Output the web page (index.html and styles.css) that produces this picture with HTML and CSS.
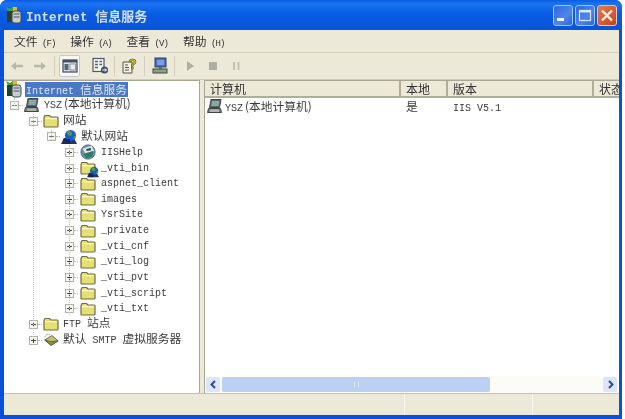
FILE: index.html
```html
<!DOCTYPE html>
<html lang="zh">
<head>
<meta charset="utf-8">
<title>Internet 信息服务</title>
<link rel="stylesheet" href="styles.css">
</head>
<body>
<svg class="defs" width="0" height="0" aria-hidden="true">
  <symbol id="folder" viewBox="0 0 16 16">
    <path d="M1 4.5 L2 2.5 H6.5 L8 4 H14 Q15 4 15 5 V13 Q15 14 14 14 H2 Q1 14 1 13 Z" fill="#e6e070" stroke="#6e6a48" stroke-width="1.2"/>
    <path d="M2 5 H14 V6.2 H2 Z" fill="#fbf6c8"/>
  </symbol>
  <symbol id="computer" viewBox="0 0 16 16">
    <path d="M4 1.5 H14 L12.5 9.5 H2.5 Z" fill="#5c6a68" stroke="#3c4644"/>
    <path d="M5 3 H12.5 L11.6 8 H4.2 Z" fill="#8aa8a8"/>
    <path d="M1.5 10.5 H13.5 L14.5 14.5 H.5 Z" fill="#7a807c" stroke="#3c4644"/>
    <path d="M3 12 H12 M3 13.2 H12" stroke="#c8ccc8"/>
  </symbol>
  <symbol id="globe" viewBox="0 0 16 16">
    <path d="M0 15 L3 9 H13 L16 15 Z" fill="#26346c"/>
    <circle cx="9.5" cy="6.5" r="5.5" fill="#1e5cc8"/>
    <path d="M7 1.5 Q12 2 11 6 Q8 8 6 5 Z M12 8 L15 6 L13 11 Z" fill="#4ea04a"/>
    <path d="M2 10 H9 V15 H2 Z" fill="#18285c"/>
  </symbol>
  <symbol id="help-site" viewBox="0 0 18 18">
    <circle cx="9" cy="9" r="8" fill="#6a94a8" stroke="#46606c"/>
    <path d="M3 5 L13 2 L16 8 L6 11 Z" fill="#dce6e4"/>
    <path d="M4 11 L15 8 L14 14 L7 16 Z" fill="#2e7c62"/>
    <path d="M7 5.5 L12 4.5 L12.5 7 L7.5 8 Z" fill="#284c70"/>
  </symbol>
  <symbol id="iis" viewBox="0 0 18 18">
    <path d="M1 1 L5 3 L9 0 L8 6 H3 Z" fill="#47a03c"/>
    <path d="M8 1 H12 V5 H8 Z" fill="#e8b820"/>
    <path d="M2 5 H8 V16 H2 Z" fill="#27402a"/>
    <rect x="7" y="5" width="9" height="12" rx="2.5" fill="#c8ccd0" stroke="#404850"/>
    <path d="M8.5 8 H14.5 M8.5 11 H14.5" stroke="#505860"/>
  </symbol>
  <symbol id="smtp" viewBox="0 0 18 16">
    <path d="M2 5 Q3 1 8 2" fill="none" stroke="#808878" stroke-dasharray="2 1"/>
    <path d="M2 8 L10 3 L17 9 L9 14 Z" fill="#c4c070" stroke="#5c6040"/>
    <path d="M2 8 L9 10 L17 9 L9 14 Z" fill="#8c9048" stroke="#5c6040"/>
  </symbol>
</svg>

<div class="window">
  <header class="titlebar">
    <svg class="title-icon" width="18" height="18"><use href="#iis"/></svg>
    <span class="title-text">Internet <span class="title-zh">信息服务</span></span>
    <div class="caption-buttons">
      <span class="cap cap-blue"><svg width="20" height="21" viewBox="0 0 20 21"><rect x="4" y="13" width="7" height="3" fill="#f0f4fc"/></svg></span>
      <span class="cap cap-blue"><svg width="20" height="21" viewBox="0 0 20 21"><rect x="4.5" y="5.5" width="11" height="10" fill="none" stroke="#dce6fa" stroke-width="1.2"/><rect x="4.5" y="5.5" width="11" height="2" fill="#dce6fa"/></svg></span>
      <span class="cap cap-red"><svg width="20" height="21" viewBox="0 0 20 21"><path d="M5 5.5 L15 15.5 M15 5.5 L5 15.5" stroke="#fbeee8" stroke-width="2.4"/></svg></span>
    </div>
  </header>

  <div class="client">
    <nav class="menubar">
      <span class="menu-item"><span class="zh">文件</span> (F)</span>
      <span class="menu-item"><span class="zh">操作</span> (A)</span>
      <span class="menu-item"><span class="zh">查看</span> (V)</span>
      <span class="menu-item"><span class="zh">帮助</span> (H)</span>
    </nav>

    <div class="toolbar">
      <span class="tool"><svg width="18" height="18" viewBox="0 0 18 18"><path d="M3 9 L8 5 V7.7 H15 V10.3 H8 V13 Z" fill="#b4b8a8"/></svg></span>
      <span class="tool"><svg width="18" height="18" viewBox="0 0 18 18"><path d="M15 9 L10 5 V7.7 H3 V10.3 H10 V13 Z" fill="#b4b8a8"/></svg></span>
      <span class="sep"></span>
      <span class="tool tool-active"><svg width="16" height="14" viewBox="0 0 16 14"><rect x="1" y="1" width="14" height="12" fill="#d8dce4" stroke="#404c60" stroke-width="1.2"/><rect x="1" y="1" width="14" height="2.4" fill="#404c60"/><rect x="2.5" y="5" width="4" height="6" fill="#566478"/><rect x="8" y="5" width="5.5" height="6" fill="#e8ecf0" stroke="#566478" stroke-width=".6"/></svg></span>
      <span class="tool"><svg width="18" height="18" viewBox="0 0 18 18"><rect x="2" y="1.5" width="11" height="13" fill="#f4f4ee" stroke="#50586a" stroke-width="1.2"/><path d="M4 4.5 H7 M4 7.5 H7 M4 10.5 H7 M8.5 4.5 H11 M8.5 7.5 H11" stroke="#506078" stroke-width="1.3"/><circle cx="13.5" cy="13" r="3.6" fill="#46506a"/><path d="M11.5 13 H15.5 M14 11.5 L15.5 13 L14 14.5" stroke="#fff" fill="none"/></svg></span>
      <span class="sep"></span>
      <span class="tool"><svg width="18" height="18" viewBox="0 0 18 18"><path d="M2 5 H11 V16 H2 Z" fill="#f4f2e4" stroke="#505448"/><path d="M4 8 H7 M4 10.5 H8 M4 13 H8" stroke="#505448"/><text class="help-mark" x="11.5" y="12">?</text></svg></span>
      <span class="sep"></span>
      <span class="tool"><svg width="18" height="18" viewBox="0 0 18 18"><rect x="4" y="1" width="11" height="9" fill="#4c70c0" stroke="#303c60"/><rect x="6" y="3" width="7" height="5" fill="#7c9ce0"/><rect x="8" y="10" width="3" height="2" fill="#6a7068"/><rect x="2" y="12" width="14" height="4" fill="#90a088" stroke="#3c4c38"/></svg></span>
      <span class="sep"></span>
      <span class="tool"><svg width="12" height="14" viewBox="0 0 12 14"><path d="M3 2 L10 7 L3 12 Z" fill="#aeb0a4"/></svg></span>
      <span class="tool"><svg width="12" height="14" viewBox="0 0 12 14"><rect x="2" y="3" width="8" height="8" fill="#aeb0a4"/></svg></span>
      <span class="tool"><svg width="12" height="14" viewBox="0 0 12 14"><path d="M3 3 H5 V11 H3 Z M7.5 3 H9.5 V11 H7.5 Z" fill="#c0c2b6"/></svg></span>
    </div>

    <main class="panes">
      <aside class="tree">
        <span class="guide g-a"></span>
        <span class="guide g-b"></span>
        <span class="guide g-c"></span>
        <span class="guide g-d"></span>
        <div class="row root"><svg width="18" height="18"><use href="#iis"/></svg><span class="label selected">Internet <span class="zh">信息服务</span></span></div>
        <div class="row d1"><span class="exp minus"></span><span class="dash"></span><svg width="16" height="16"><use href="#computer"/></svg><span class="label">YSZ<span class="zh paren">(本地计算机)</span></span></div>
        <div class="row d2"><span class="exp minus"></span><span class="dash"></span><svg width="16" height="16"><use href="#folder"/></svg><span class="label"><span class="zh">网站</span></span></div>
        <div class="row d3"><span class="exp minus"></span><span class="dash"></span><svg width="16" height="16"><use href="#globe"/></svg><span class="label"><span class="zh">默认网站</span></span></div>
        <div class="row d4"><span class="exp"></span><span class="dash"></span><svg width="16" height="16"><use href="#help-site"/></svg><span class="label">IISHelp</span></div>
        <div class="row d4"><span class="exp"></span><span class="dash"></span><span class="stack"><svg width="16" height="16"><use href="#folder"/></svg><svg class="badge" width="12" height="12"><use href="#globe"/></svg></span><span class="label">_vti_bin</span></div>
        <div class="row d4"><span class="exp"></span><span class="dash"></span><svg width="16" height="16"><use href="#folder"/></svg><span class="label">aspnet_client</span></div>
        <div class="row d4"><span class="exp"></span><span class="dash"></span><svg width="16" height="16"><use href="#folder"/></svg><span class="label">images</span></div>
        <div class="row d4"><span class="exp"></span><span class="dash"></span><svg width="16" height="16"><use href="#folder"/></svg><span class="label">YsrSite</span></div>
        <div class="row d4"><span class="exp"></span><span class="dash"></span><svg width="16" height="16"><use href="#folder"/></svg><span class="label">_private</span></div>
        <div class="row d4"><span class="exp"></span><span class="dash"></span><svg width="16" height="16"><use href="#folder"/></svg><span class="label">_vti_cnf</span></div>
        <div class="row d4"><span class="exp"></span><span class="dash"></span><svg width="16" height="16"><use href="#folder"/></svg><span class="label">_vti_log</span></div>
        <div class="row d4"><span class="exp"></span><span class="dash"></span><svg width="16" height="16"><use href="#folder"/></svg><span class="label">_vti_pvt</span></div>
        <div class="row d4"><span class="exp"></span><span class="dash"></span><svg width="16" height="16"><use href="#folder"/></svg><span class="label">_vti_script</span></div>
        <div class="row d4"><span class="exp"></span><span class="dash"></span><svg width="16" height="16"><use href="#folder"/></svg><span class="label">_vti_txt</span></div>
        <div class="row d2"><span class="exp"></span><span class="dash"></span><svg width="16" height="16"><use href="#folder"/></svg><span class="label">FTP <span class="zh">站点</span></span></div>
        <div class="row d2"><span class="exp"></span><span class="dash"></span><svg width="16" height="16"><use href="#smtp"/></svg><span class="label"><span class="zh">默认</span> SMTP <span class="zh">虚拟服务器</span></span></div>
      </aside>

      <section class="list">
        <div class="list-head">
          <span class="col c-name">计算机</span>
          <span class="col c-local">本地</span>
          <span class="col c-ver">版本</span>
          <span class="col c-state">状态</span>
        </div>
        <div class="list-body">
          <div class="list-row">
            <span class="c-name cell"><svg width="16" height="16"><use href="#computer"/></svg>YSZ<span class="zh paren">(本地计算机)</span></span>
            <span class="c-local cell"><span class="zh">是</span></span>
            <span class="c-ver cell">IIS V5.1</span>
          </div>
        </div>
        <div class="hscroll">
          <span class="arrow"><svg width="9" height="9" viewBox="0 0 9 9"><path d="M6 1 L2.5 4.5 L6 8" fill="none" stroke="#2c4c98" stroke-width="2"/></svg></span>
          <div class="track"><div class="thumb"><span class="grip"></span></div></div>
          <span class="arrow"><svg width="9" height="9" viewBox="0 0 9 9"><path d="M3 1 L6.5 4.5 L3 8" fill="none" stroke="#2c4c98" stroke-width="2"/></svg></span>
        </div>
      </section>
    </main>

    <footer class="status">
      <span class="st st1"></span>
      <span class="st st2"></span>
      <span class="st st3"></span>
    </footer>
  </div>
</div>
</body>
</html>
```

FILE: styles.css
```css
* { box-sizing: border-box; }

html, body {
  margin: 0;
  width: 625px;
  height: 419px;
  overflow: hidden;
  background: #fff;
}

body {
  font-family: "Liberation Mono", "Noto Sans CJK SC", monospace;
  font-size: 10px;
  color: #333;
}

.defs { position: absolute; }

.zh {
  font-family: "Noto Sans CJK SC", sans-serif;
  font-size: 11.75px;
  line-height: 14px;
  letter-spacing: 0;
}

.paren { margin-left: 2px; }

.window {
  width: 622px;
  height: 419px;
  display: flex;
  flex-direction: column;
  background: #0a50d8;
  border-radius: 7px 7px 0 0;
  overflow: hidden;
  filter: blur(0.45px);
}

.titlebar {
  height: 30px;
  flex: none;
  display: flex;
  align-items: center;
  padding: 0 5px 0 5px;
  background: linear-gradient(#0a5ce0 0, #1a74f0 12%, #0a5ce4 45%, #0754d8 100%);
}

.title-icon { flex: none; }

.title-text {
  margin-left: 3px;
  font-weight: bold;
  font-size: 12.5px;
  letter-spacing: .2px;
  color: #d4e0f8;
}

.title-zh {
  font-family: "Noto Sans CJK SC", sans-serif;
  font-size: 13px;
  letter-spacing: 0;
}

.caption-buttons {
  margin-left: auto;
  display: flex;
  gap: 2px;
}

.cap {
  width: 20px;
  height: 21px;
  border: 1px solid #a8c4f4;
  border-radius: 3px;
  display: flex;
  align-items: center;
  justify-content: center;
}

.cap svg { margin: -1px; }
.cap-blue { background: linear-gradient(135deg, #2e6adc, #4c86ec 60%, #2f62d8); }
.cap-red { background: linear-gradient(135deg, #e07a50, #d85a30 60%, #c04418); border-color: #e8c8c0; }

.client {
  flex: 1;
  min-height: 0;
  margin: 0 3px 4px 4px;
  display: flex;
  flex-direction: column;
  background: #ece9d8;
}

.menubar {
  height: 23px;
  flex: none;
  display: flex;
  align-items: center;
  padding-left: 10px;
  border-bottom: 1px solid #cfccb8;
  font-size: 9px;
  letter-spacing: -.9px;
}

.menu-item {
  width: 56.3px;
  flex: none;
  white-space: nowrap;
}

.toolbar {
  height: 27px;
  flex: none;
  display: flex;
  align-items: center;
  padding-left: 1px;
  border-bottom: 1px solid #cfccb8;
}

.tool {
  width: 23px;
  height: 22px;
  display: flex;
  align-items: center;
  justify-content: center;
  flex: none;
}

.tool-active {
  width: 21px;
  margin: 0 8px 0 1px;
  background: #f8f7f0;
  border: 1px solid #c4c9d8;
  border-radius: 2px;
}

.sep {
  width: 1px;
  height: 20px;
  margin: 0 3px;
  background: #d4d0bc;
  flex: none;
}

.help-mark {
  font-family: "Liberation Sans", sans-serif;
  font-size: 14px;
  font-weight: bold;
  text-anchor: middle;
  fill: #d8c020;
  stroke: #4c4c18;
  stroke-width: .5px;
}

.panes {
  flex: 1;
  min-height: 0;
  display: flex;
  gap: 4px;
}

.tree {
  position: relative;
  width: 196px;
  flex: none;
  background: #fff;
  border-top: 1px solid #a9a691;
  border-right: 1px solid #a9a691;
  overflow: hidden;
}

.guide {
  position: absolute;
  width: 0;
  border-left: 1px dotted #c4c4bc;
}

.g-a { left: 10px; top: 17px; height: 8px; }
.g-b { left: 29px; top: 33px; height: 225px; }
.g-c { left: 47px; top: 49px; height: 10px; }
.g-d { left: 65px; top: 64px; height: 170px; }

.row {
  height: 15.65px;
  display: flex;
  align-items: center;
  white-space: nowrap;
}

.row svg { flex: none; }
.root { height: 16.65px; padding-left: 1px; }
.root svg { margin-right: 2px; }
.d1 { padding-left: 6px; }
.d2 { padding-left: 25px; }
.d3 { padding-left: 43px; }
.d4 { padding-left: 61px; }

.exp {
  width: 9px;
  height: 9px;
  flex: none;
  border: 1px solid #b0b4a8;
  background:
    linear-gradient(#444, #444) center / 5px 1px no-repeat,
    linear-gradient(#444, #444) center / 1px 5px no-repeat,
    #f6f6f0;
}

.exp.minus {
  background:
    linear-gradient(#777, #777) center / 5px 1px no-repeat,
    #f6f6f0;
}

.dash {
  width: 4px;
  flex: none;
  border-top: 1px dotted #b8b8b0;
  margin-right: 2px;
}

.d1 .dash, .d2 .dash, .d3 .dash { margin-right: 1px; }

.stack {
  position: relative;
  width: 16px;
  height: 16px;
  flex: none;
}

.badge {
  position: absolute;
  right: -3px;
  bottom: -2px;
}

.label {
  margin-left: 5px;
  font-size: 10px;
  color: #3a3a3a;
}

.d1 .label, .d2 .label, .d3 .label {
  margin-left: 4px;
  margin-bottom: 3px;
}

.selected {
  margin-left: 0;
  padding: 0 1px;
  background: #4a78c4;
  color: #dfe8f8;
}

.list {
  flex: 1;
  min-width: 0;
  display: flex;
  flex-direction: column;
  background: #fff;
  border-top: 1px solid #a9a691;
  border-left: 1px solid #a9a691;
  overflow: hidden;
}

.list-head {
  height: 17px;
  flex: none;
  display: flex;
  background: #ece9d8;
  border-bottom: 2px solid #b0ad98;
  font-family: "Noto Sans CJK SC", sans-serif;
  font-size: 12px;
}

.col {
  padding-left: 5px;
  line-height: 15px;
  white-space: nowrap;
  border-right: 2px solid #b0ad98;
}

.c-name { width: 196px; flex: none; }
.c-local { width: 47px; flex: none; }
.c-ver { width: 146px; flex: none; }
.c-state { flex: 1; border-right: 0; overflow: hidden; }

.list-body {
  flex: 1;
  min-height: 0;
}

.list-row {
  display: flex;
  height: 17px;
  align-items: baseline;
}

.cell {
  display: block;
  padding-left: 5px;
  font-size: 10px;
  color: #3a3a3a;
  white-space: nowrap;
}

.cell svg { margin: 0 2px 0 -3px; vertical-align: -3px; }

.hscroll {
  height: 17px;
  flex: none;
  display: flex;
  align-items: center;
  padding: 0 2px 1px 1px;
  background: #fbfbf8;
}

.arrow {
  width: 14px;
  height: 15px;
  flex: none;
  display: flex;
  align-items: center;
  justify-content: center;
  background: #dce6f8;
  border-radius: 2px;
}

.track {
  flex: 1;
  height: 15px;
  padding-left: 2px;
}

.thumb {
  width: 268px;
  height: 100%;
  display: flex;
  align-items: center;
  justify-content: center;
  background: #bcd0f4;
  border-radius: 2px;
}

.grip {
  width: 5px;
  height: 5px;
  border-left: 1px solid #e0e8fa;
  border-right: 1px solid #e0e8fa;
}

.status {
  height: 22px;
  flex: none;
  display: flex;
  border-top: 1px solid #c4c1ac;
}

.st { border-right: 1px solid #f8f7f0; }
.st1 { width: 401px; }
.st2 { width: 128px; }
.st3 { flex: 1; border-right: 0; }
```
